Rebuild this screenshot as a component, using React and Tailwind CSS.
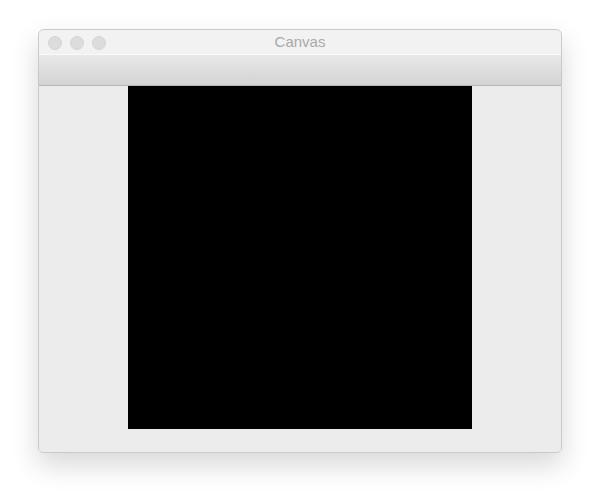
import React from "react";

const TrafficLight = () => (
  <span className="block w-[14px] h-[14px] rounded-full bg-[#dcdcdc] border border-[#d4d4d4]" />
);

const App = () => {
  return (
    <div className="w-[600px] h-[500px] bg-white pt-[29px] pl-[38px]">
      {/* Window */}
      <div className="w-[524px] h-[424px] flex flex-col border border-[#c9c9c9] rounded-t-[6px] rounded-b-[5px] bg-[#ececec] shadow-[0_12px_28px_rgba(0,0,0,0.16)] overflow-hidden">
        {/* Title bar */}
        <div className="relative h-[25px] shrink-0 flex items-center bg-[#f2f2f2] border-b border-[#fafafa]">
          <div className="flex items-center gap-[8px] pl-[9px] pt-[1px]">
            <TrafficLight />
            <TrafficLight />
            <TrafficLight />
          </div>
          <span
            className="absolute inset-0 flex items-center justify-center pt-[1px] text-[15px] text-[#a9a9a9]"
            style={{ fontFamily: '"Liberation Sans", Arial, sans-serif' }}
          >
            Canvas
          </span>
        </div>

        {/* Toolbar */}
        <div className="h-[31px] shrink-0 bg-gradient-to-b from-[#e9e9e9] to-[#d3d3d3] border-b border-[#b5b5b5]" />

        {/* Content */}
        <div className="flex-1 flex justify-center bg-[#ececec]">
          <div className="w-[344px] h-[343px] bg-black" />
        </div>
      </div>
    </div>
  );
};

export default App;
